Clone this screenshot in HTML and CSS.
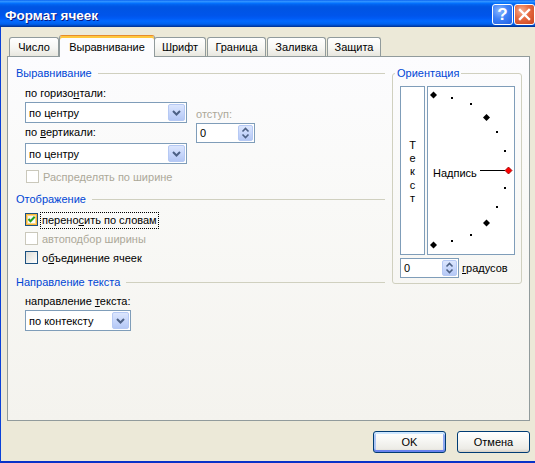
FILE: index.html
```html
<!DOCTYPE html>
<html lang="ru">
<head>
<meta charset="utf-8">
<title>Формат ячеек</title>
<link rel="stylesheet" href="styles.css">
</head>
<body>
<div class="window">
  <div class="titlebar">
    <div class="title">Формат ячеек</div>
    <div class="caption-buttons">
      <div class="cap-btn help">?</div>
      <div class="cap-btn close">
        <svg width="19" height="19" viewBox="0 0 19 19"><path d="M5 5 L14 14 M14 5 L5 14" stroke="#fff" stroke-width="2.4" stroke-linecap="square"/></svg>
      </div>
    </div>
  </div>
  <div class="client">
    <div class="tabs">
      <div class="tab tab-number">Число</div>
      <div class="tab tab-align active">Выравнивание</div>
      <div class="tab tab-font">Шрифт</div>
      <div class="tab tab-border">Граница</div>
      <div class="tab tab-fill">Заливка</div>
      <div class="tab tab-protect">Защита</div>
    </div>
    <div class="panel">
      <div class="left-col">
        <div class="group-h">Выравнивание</div>
        <div class="align-row">
          <div class="align-main">
            <div class="field-label">по горизо<u>н</u>тали:</div>
            <div class="combo combo-wide">
              <span class="combo-text">по центру</span>
              <span class="combo-btn"><svg width="15" height="15" viewBox="0 0 15 15"><path d="M4 6 L7.5 9.5 L11 6" fill="none" stroke="#4D6185" stroke-width="2"/></svg></span>
            </div>
            <div class="field-label label-second">по <u>в</u>ертикали:</div>
            <div class="combo combo-wide combo-second">
              <span class="combo-text">по центру</span>
              <span class="combo-btn"><svg width="15" height="15" viewBox="0 0 15 15"><path d="M4 6 L7.5 9.5 L11 6" fill="none" stroke="#4D6185" stroke-width="2"/></svg></span>
            </div>
          </div>
          <div class="align-indent">
            <div class="field-label disabled">отступ:</div>
            <div class="spinner spinner-indent">
              <span class="spin-text">0</span>
              <span class="spin-btn"><svg width="13" height="14" viewBox="0 0 13 14"><path d="M3.5 5.5 L6.5 2.5 L9.5 5.5 M3.5 8.5 L6.5 11.5 L9.5 8.5" fill="none" stroke="#4D6185" stroke-width="1.6"/></svg></span>
            </div>
          </div>
        </div>
        <div class="check check-dist disabled">
          <span class="box"></span><span class="check-label">Распределять по ширине</span>
        </div>

        <div class="group-h group-display">Отображение</div>
        <div class="check-list">
          <div class="check hot">
            <span class="box"><svg width="11" height="11" viewBox="0 0 11 11"><path d="M2.5 5 L4.5 7.2 L8.7 2.8" fill="none" stroke="#21A121" stroke-width="2"/></svg></span><span class="check-label focus">перено<u>с</u>ить по словам</span>
          </div>
          <div class="check disabled">
            <span class="box"></span><span class="check-label">автоподбор ширины</span>
          </div>
          <div class="check">
            <span class="box"></span><span class="check-label">о<u>б</u>ъединение ячеек</span>
          </div>
        </div>

        <div class="group-h group-direction">Направление текста</div>
        <div class="field-label label-direction">направление <u>т</u>екста:</div>
        <div class="combo combo-narrow">
          <span class="combo-text">по контексту</span>
          <span class="combo-btn"><svg width="15" height="15" viewBox="0 0 15 15"><path d="M4 6 L7.5 9.5 L11 6" fill="none" stroke="#4D6185" stroke-width="2"/></svg></span>
        </div>
      </div>

      <fieldset class="orient">
        <legend>Ориентация</legend>
        <div class="orient-boxes">
          <div class="vtext">
            <span>Т</span><span>е</span><span>к</span><span>с</span><span>т</span>
          </div>
          <div class="dial">
            <svg class="dial-art" width="86" height="167" viewBox="0 0 86 167">
              <g fill="#000">
                <polygon points="5.5,4.5 9,8 5.5,11.5 2,8"/>
                <polygon points="58.5,27 62,30.5 58.5,34 55,30.5"/>
                <polygon points="58.5,132.5 62,136 58.5,139.5 55,136"/>
                <polygon points="5.5,154.5 9,158 5.5,161.5 2,158"/>
                <rect x="23" y="10" width="2" height="2"/>
                <rect x="42" y="16" width="2" height="2"/>
                <rect x="68" y="44" width="2" height="2"/>
                <rect x="76" y="63" width="2" height="2"/>
                <rect x="76" y="100" width="2" height="2"/>
                <rect x="68" y="119" width="2" height="2"/>
                <rect x="42" y="147" width="2" height="2"/>
                <rect x="23" y="153" width="2" height="2"/>
              </g>
              <line x1="52" y1="83.5" x2="77" y2="83.5" stroke="#000" stroke-width="1"/>
              <polygon points="80.5,80 84,83.5 80.5,87 77,83.5" fill="#FF0000" stroke="#900000" stroke-width="0.8"/>
            </svg>
            <span class="dial-label">Надпись</span>
          </div>
        </div>
        <div class="degrees-row">
          <div class="spinner spinner-deg">
            <span class="spin-text">0</span>
            <span class="spin-btn"><svg width="13" height="14" viewBox="0 0 13 14"><path d="M3.5 5.5 L6.5 2.5 L9.5 5.5 M3.5 8.5 L6.5 11.5 L9.5 8.5" fill="none" stroke="#4D6185" stroke-width="1.6"/></svg></span>
          </div>
          <span class="degrees-label"><u>г</u>радусов</span>
        </div>
      </fieldset>
    </div>
    <div class="dialog-buttons">
      <div class="btn btn-default">OK</div>
      <div class="btn">Отмена</div>
    </div>
  </div>
</div>
</body>
</html>
```

FILE: styles.css
```css
* {
  box-sizing: border-box;
}

html,
body {
  margin: 0;
  padding: 0;
}

body {
  width: 535px;
  height: 463px;
  overflow: hidden;
  background: #ECE9D8;
  font-family: "Liberation Sans", Arial, sans-serif;
  font-size: 11px;
  color: #000;
}

u {
  text-decoration: underline;
  text-underline-offset: 1px;
}

.window {
  width: 535px;
  height: 463px;
  display: flex;
  flex-direction: column;
}

/* ---------- title bar ---------- */
.titlebar {
  flex: none;
  height: 27px;
  display: flex;
  align-items: flex-start;
  background: linear-gradient(to bottom,
    #0058EE 0%, #3593FF 4%, #288EFF 7%, #127DFF 10%, #036FFC 13%,
    #0262EE 17%, #0057E5 24%, #0054E3 30%, #0055EB 58%, #005BF5 68%,
    #026AFE 78%, #0062EF 88%, #0052D6 93%, #0040AB 96%, #003092 100%);
}

.title {
  flex: 1;
  padding: 7px 0 0 5px;
  line-height: 17px;
  font-size: 13.5px;
  font-weight: bold;
  color: #fff;
  text-shadow: 1px 1px 0 #0A1883;
}

.caption-buttons {
  display: flex;
  gap: 1px;
  margin-top: 4px;
}

.cap-btn {
  width: 21px;
  height: 21px;
  border: 1px solid #fff;
  border-radius: 3px;
  display: flex;
  align-items: center;
  justify-content: center;
}

.cap-btn.help {
  background: radial-gradient(circle at 35% 30%, #8CB8FF 0%, #3F82F7 45%, #1F5FE3 100%);
  color: #fff;
  font-size: 17px;
  font-weight: bold;
  line-height: 19px;
}

.cap-btn.close {
  background: radial-gradient(circle at 35% 30%, #F7AE90 0%, #E5693F 45%, #C9431D 100%);
}

/* ---------- client area ---------- */
.client {
  flex: 1;
  display: flex;
  flex-direction: column;
  padding: 8px 5px 0 6px;
  border-left: 1px solid #0A41D8;
  border-bottom: 2px solid #0832C8;
}

.tabs {
  display: flex;
  align-items: flex-end;
  gap: 1px;
  margin-left: 2px;
  height: 21px;
}

.tab {
  height: 19px;
  padding-top: 1px;
  line-height: 17px;
  text-align: center;
  white-space: nowrap;
  border: 1px solid #919B9C;
  border-bottom: 0;
  border-radius: 3px 3px 0 0;
  background: linear-gradient(#FFFFFF 0%, #F6F6F3 55%, #E8E7DF 100%);
}

.tab.active {
  position: relative;
  z-index: 1;
  height: 22px;
  margin-bottom: -1px;
  margin-left: -1px;
  padding-top: 3px;
  line-height: 16px;
  border-top: 1px solid #E68B2C;
  background: #FCFCFE;
  box-shadow: inset 0 2px 0 #FFC73C;
}

.tab-number { width: 50px; }
.tab-align { width: 96px; }
.tab-font { width: 52px; margin-left: -2px; }
.tab-border { width: 59px; }
.tab-fill { width: 59px; }
.tab-protect { width: 54px; }

.panel {
  height: 365px;
  display: flex;
  align-items: flex-start;
  gap: 7px;
  padding: 9px 0 0 8px;
  border: 1px solid #919B9C;
  background: linear-gradient(#FCFCFE 0%, #F9F9F7 40%, #F4F3EE 100%);
}

/* ---------- left column ---------- */
.left-col {
  width: 369px;
  display: flex;
  flex-direction: column;
}

.group-h {
  display: flex;
  align-items: center;
  gap: 6px;
  height: 14px;
  line-height: 14px;
  color: #0046D5;
  white-space: nowrap;
}

.group-h::after {
  content: "";
  flex: 1;
  border-top: 1px solid #D0D0BF;
}

.group-display { margin-top: 6px; }
.group-direction { margin-top: 8px; }

.field-label {
  line-height: 14px;
  height: 14px;
  white-space: nowrap;
}

.field-label.disabled { color: #ACA899; }

.align-row {
  display: flex;
  gap: 9px;
  margin-top: 6px;
  padding-left: 9px;
}

.align-main {
  width: 162px;
  display: flex;
  flex-direction: column;
}

.label-second { margin-top: 2px; }

.align-indent {
  padding-top: 21px;
  display: flex;
  flex-direction: column;
}

.combo {
  height: 21px;
  display: flex;
  align-items: center;
  padding: 1px;
  border: 1px solid #7F9DB9;
  background: #fff;
  margin-top: 2px;
}

.combo-second { margin-top: 4px; }

.combo-wide { width: 162px; }

.combo-narrow {
  width: 106px;
  margin-left: 9px;
}

.combo-text {
  flex: 1;
  padding-left: 2px;
  white-space: nowrap;
}

.combo-btn,
.spin-btn {
  display: flex;
  align-items: center;
  justify-content: center;
  border: 1px solid #B6C9F4;
  border-radius: 2px;
  background: linear-gradient(#DCE6FD 0%, #C8D7FB 50%, #B5C8F5 100%);
}

.combo-btn {
  width: 17px;
  height: 17px;
}

.spinner {
  height: 20px;
  width: 59px;
  display: flex;
  align-items: center;
  padding: 1px;
  border: 1px solid #7F9DB9;
  background: #fff;
}

.spinner-indent { margin-top: 2px; }

.spin-text {
  flex: 1;
  padding-left: 2px;
}

.spin-btn {
  width: 15px;
  height: 16px;
}

.check {
  display: flex;
  align-items: flex-start;
  height: 17px;
  padding-left: 9px;
  white-space: nowrap;
}

.check-dist {
  margin-top: 5px;
  padding-left: 10px;
}

.check-list {
  display: flex;
  flex-direction: column;
  gap: 2px;
  margin-top: 6px;
}

.box {
  flex: none;
  width: 13px;
  height: 13px;
  margin-top: 1px;
  display: flex;
  align-items: center;
  justify-content: center;
  border: 1px solid #1C5180;
  background: linear-gradient(135deg, #DCDCD7 0%, #F4F4F2 70%, #FFFFFF 100%);
}

.check.hot .box {
  box-shadow: inset 0 0 0 1px #F8B636, inset 0 0 0 2px #FDD889;
  background: linear-gradient(135deg, #F2F2EF 0%, #FFFFFF 100%);
}

.check.disabled .box {
  border-color: #CAC8BB;
  background: #fff;
}

.check-label {
  margin-left: 2px;
  padding: 0 1px;
  height: 17px;
  line-height: 15px;
  border: 1px dotted transparent;
}

.check-label.focus {
  border-color: #000;
}

.check.disabled .check-label {
  color: #ACA899;
}

.label-direction {
  margin-top: 5px;
  padding-left: 9px;
}

/* ---------- orientation ---------- */
.orient {
  width: 130px;
  min-width: 0;
  margin: 0;
  padding: 6px 0 5px 0;
  border: 1px solid #D0D0BF;
  border-radius: 3px;
}

.orient legend {
  margin-left: 2px;
  padding: 0 2px;
  line-height: 14px;
  color: #0046D5;
}

.orient-boxes {
  display: flex;
  gap: 2px;
  margin-left: 7px;
}

.vtext {
  width: 25px;
  height: 169px;
  display: flex;
  flex-direction: column;
  align-items: center;
  justify-content: center;
  padding-top: 3px;
  border: 1px solid #7F9DB9;
  background: #fff;
  line-height: 13.3px;
}

.dial {
  position: relative;
  width: 88px;
  height: 169px;
  display: flex;
  align-items: center;
  padding: 5px 0 0 5px;
  border: 1px solid #7F9DB9;
  background: #fff;
}

.dial-art {
  position: absolute;
  left: 0;
  top: 0;
}

.dial-label {
  position: relative;
  line-height: 14px;
}

.degrees-row {
  display: flex;
  align-items: center;
  gap: 3px;
  margin: 3px 0 0 7px;
}

.degrees-label {
  white-space: nowrap;
}

/* ---------- dialog buttons ---------- */
.dialog-buttons {
  display: flex;
  justify-content: flex-end;
  gap: 11px;
  margin-top: 10px;
}

.btn {
  width: 73px;
  height: 22px;
  display: flex;
  align-items: center;
  justify-content: center;
  border: 1px solid #003C74;
  border-radius: 3px;
  background: linear-gradient(#FFFFFF 0%, #F7F7F4 40%, #ECEBE6 85%, #D6D0C5 100%);
}

.btn-default {
  box-shadow: inset 0 2px 0 #CEE7FF, inset 0 -2px 0 #6982EE, inset 2px 0 0 #ADC6F5, inset -2px 0 0 #8DA8F0;
}
```
